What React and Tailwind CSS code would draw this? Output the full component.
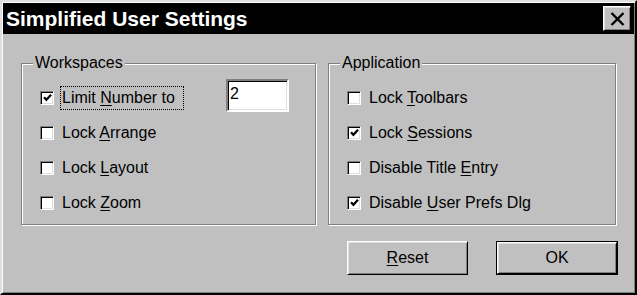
import React from 'react';

const font = { fontFamily: '"Liberation Sans", Arial, sans-serif' };

const CheckBox = ({ checked }) => (
  <span className="flex h-[14px] w-[14px] shrink-0 items-center justify-center border-t border-l border-t-[#808080] border-l-[#808080] border-b border-r border-b-white border-r-white bg-white shadow-[inset_1px_1px_0_#000,inset_-1px_-1px_0_#dfdfdf]">
    {checked && (
      <svg width="9" height="9" viewBox="0 0 9 9">
        <path d="M1 4.2 L3.4 6.8 L8 1.8" fill="none" stroke="#000" strokeWidth="2.2" />
      </svg>
    )}
  </span>
);

const Option = ({ checked, before, mnemonic, after, focused, children }) => (
  <div className="flex h-[35px] items-center gap-[8px]">
    <CheckBox checked={checked} />
    <span
      className={
        focused
          ? 'block h-[24px] border border-dotted border-black pr-[4px] pl-[1px] -ml-[2px] leading-[22px] whitespace-pre'
          : 'block leading-[22px] whitespace-pre'
      }
    >
      {before}
      <span className="underline decoration-1 underline-offset-[2px]">{mnemonic}</span>
      {after}
    </span>
    {children}
  </div>
);

const Group = ({ title, className, children }) => (
  <fieldset
    className={`h-[171px] border border-[#808080] pl-[11px] pt-[8px] shadow-[inset_1px_1px_0_#fff,1px_1px_0_#fff] ${className}`}
  >
    <legend className="bg-[#c0c0c0] px-[2px] leading-[18px]">{title}</legend>
    <div className="flex flex-col pl-[7px]">{children}</div>
  </fieldset>
);

const Button = ({ isDefault, children }) => (
  <button
    className={
      isDefault
        ? 'h-[34px] w-[122px] border border-black bg-[#c0c0c0]'
        : 'h-[34px] w-[121px] bg-[#c0c0c0]'
    }
  >
    <span className="flex h-full w-full items-center justify-center border-t border-l border-t-white border-l-white border-b border-r border-b-black border-r-black shadow-[inset_1px_1px_0_#dfdfdf,inset_-1px_-1px_0_#808080]">
      {children}
    </span>
  </button>
);

export default function App() {
  return (
    <div
      className="flex h-[295px] w-[637px] flex-col border-2 border-t-[#dfdfdf] border-l-[#dfdfdf] border-b-black border-r-black bg-[#c0c0c0] p-px text-[16px] text-black shadow-[inset_1px_1px_0_#fff,inset_-1px_-1px_0_#808080]"
      style={font}
    >
      {/* title bar */}
      <div className="flex h-[31px] shrink-0 items-center justify-between bg-black pl-[3px] pr-[3px]">
        <span className="pb-[1px] text-[21px] font-bold leading-none text-white">Simplified User Settings</span>
        <button className="flex h-[25px] w-[28px] items-center justify-center border-t border-l border-t-white border-l-white border-b border-r border-b-black border-r-black bg-[#c0c0c0] shadow-[inset_1px_1px_0_#dfdfdf,inset_-1px_-1px_0_#808080]">
          <svg width="15" height="14" viewBox="0 0 15 14">
            <path d="M1.5 1 L13.5 13 M13.5 1 L1.5 13" stroke="#000" strokeWidth="2.4" />
          </svg>
        </button>
      </div>

      {/* groups */}
      <div className="mt-[20px] flex gap-[12px] pl-[18px]">
        <Group title="Workspaces" className="w-[295px] pr-[26px]">
          <Option checked focused before="Limit " mnemonic="N" after="umber to ">
            <input
              readOnly
              value="2"
              className="mb-[4px] ml-auto h-[33px] w-[63px] border-2 border-t-[#808080] border-l-[#808080] border-b-white border-r-white bg-white pl-[2px] pb-[4px] shadow-[inset_1px_1px_0_#000,inset_-1px_-1px_0_#dfdfdf] outline-none"
              style={font}
            />
          </Option>
          <Option before="Lock " mnemonic="A" after="rrange" />
          <Option before="Lock " mnemonic="L" after="ayout" />
          <Option before="Lock " mnemonic="Z" after="oom" />
        </Group>
        <Group title="Application" className="w-[288px]">
          <Option before="Lock " mnemonic="T" after="oolbars" />
          <Option checked before="Lock " mnemonic="S" after="essions" />
          <Option before="Disable Title " mnemonic="E" after="ntry" />
          <Option checked before="Disable " mnemonic="U" after="ser Prefs Dlg" />
        </Group>
      </div>

      {/* buttons */}
      <div className="mt-[16px] flex justify-end gap-[28px] pr-[16px]">
        <Button>
          <span className="underline decoration-1 underline-offset-[2px]">R</span>eset
        </Button>
        <Button isDefault>OK</Button>
      </div>
    </div>
  );
}
